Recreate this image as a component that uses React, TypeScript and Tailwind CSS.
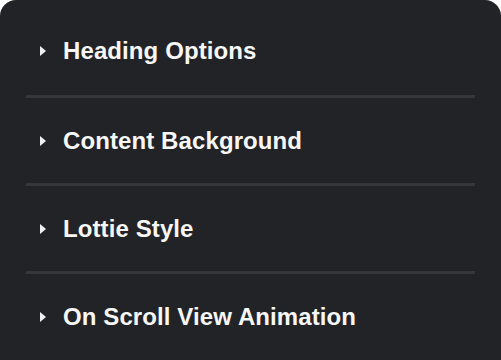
const sections = [
  "Heading Options",
  "Content Background",
  "Lottie Style",
  "On Scroll View Animation",
];

function Caret() {
  return (
    <svg width="6" height="10" viewBox="0 0 6 10" className="shrink-0">
      <path d="M0 0 L6 5 L0 10 Z" fill="#f0f0f0" />
    </svg>
  );
}

export default function App() {
  return (
    <div className="w-[501px] h-[360px] bg-white overflow-hidden">
      <div className="h-full bg-[#222327] rounded-t-[16px] pt-[6px] px-[26px]">
        {sections.map((label, i) => (
          <div key={label}>
            {i > 0 && <div className="h-[3px] bg-[#36373b]" />}
            <div
              className={`flex items-center gap-[17px] pl-[14px] ${
                i === 0 ? "h-[89px]" : "h-[85px]"
              }`}
            >
              <Caret />
              <span
                className="text-[24px] font-bold tracking-[0.1px] text-[#f7f7f7] leading-none"
                style={{ fontFamily: '"Liberation Sans", Arial, sans-serif' }}
              >
                {label}
              </span>
            </div>
          </div>
        ))}
      </div>
    </div>
  );
}
